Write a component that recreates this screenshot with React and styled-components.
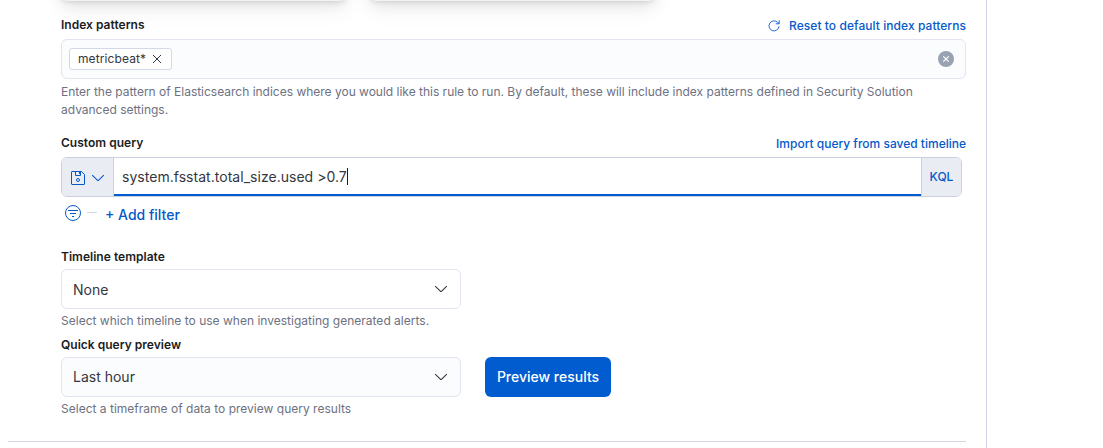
import React from "react";
import styled, { createGlobalStyle } from "styled-components";

const Global = createGlobalStyle`
  *, *::before, *::after { box-sizing: border-box; }
  html, body { margin: 0; background: #fff; overflow: hidden; }
  body { font-family: Inter, "Liberation Sans", sans-serif; color: #343741; font-size: 14px; }
`;

const Panel = styled.main`
  width: 987px;
  height: 448px;
  overflow: hidden;
  border-right: 1px solid #d0d3e6;
  padding: 0 20px 0 8px;
`;

const Body = styled.div`
  height: 441px;
  padding-left: 53px;
  display: flex;
  flex-direction: column;
`;

const Cards = styled.div`
  display: flex;
  gap: 24px;
  height: 1px;
`;

const Card = styled.div`
  display: flex;
  align-items: flex-end;
  width: 285px;
  height: 1px;
`;

const CardSurface = styled.div`
  flex: none;
  width: 100%;
  height: 120px;
  border-radius: 6px;
  background: #f0f2f7;
  box-shadow: 0 1px 5px rgba(0, 0, 0, 0.1), 0 3.6px 13px rgba(0, 0, 0, 0.07),
    0 8.4px 23px rgba(0, 0, 0, 0.06);
`;

const LabelRow = styled.div`
  display: flex;
  justify-content: space-between;
  height: 18px;
  margin-top: ${(p) => p.$top}px;
  margin-bottom: ${(p) => p.$gap}px;
`;

const Label = styled.label`
  font-size: 12px;
  line-height: 18px;
  font-weight: 600;
  letter-spacing: 0.02px;
  color: #1a1c21;
`;

const Link = styled.a`
  display: flex;
  align-items: center;
  gap: 9px;
  height: 18px;
  margin-top: 1px;
  font-size: 12px;
  line-height: 18px;
  font-weight: 500;
  letter-spacing: ${(p) => p.$tracking || 0}px;
  color: #0559c9;
`;

const Field = styled.div`
  display: flex;
  align-items: center;
  justify-content: space-between;
  width: ${(p) => p.$width}px;
  height: 40px;
  padding: 0 ${(p) => p.$right || 11}px 0 ${(p) => p.$left || 11}px;
  border: 1px solid #e2e5f0;
  border-radius: 6px;
  background: ${(p) => (p.$plain ? "#fff" : "#fbfcfd")};
`;

const FieldValue = styled.span`
  padding-bottom: ${(p) => (p.$raised ? 2 : 0)}px;
`;

const Pill = styled.span`
  display: flex;
  align-items: center;
  gap: 6px;
  height: 22px;
  padding: 0 9px 0 8px;
  border: 1px solid #d3d8e8;
  border-radius: 3px;
  background: #fff;
  font-size: 12px;
  line-height: 18px;
  letter-spacing: 0.1px;
`;

const PillText = styled.span`
  padding-bottom: 1px;
`;

const Help = styled.p`
  margin: ${(p) => (p.$tight ? 3 : 4)}px 0 0;
  font-size: 12px;
  line-height: 18px;
  letter-spacing: ${(p) => (p.$tight ? 0.01 : -0.008)}px;
  color: #6d7182;
`;

const QueryBar = styled.div`
  display: flex;
  width: 901px;
  height: 40px;
  border: 1px solid #cbcfe2;
  border-radius: 6px;
  overflow: hidden;
`;

const SaveButton = styled.button`
  display: flex;
  align-items: center;
  gap: 4px;
  width: 52px;
  padding: 2px 0 0 8px;
  border: 0;
  border-right: 1px solid #cbcfe2;
  background: #e9edf3;
`;

const QueryInput = styled.div`
  flex: 1;
  display: flex;
  align-items: center;
  padding-left: 8px;
  border-bottom: 2px solid #005ccf;
  font-size: 14px;
  letter-spacing: 0.03px;
`;

const Caret = styled.span`
  width: 1px;
  height: 17px;
  background: #1a1c21;
`;

const Language = styled.button`
  width: 40px;
  padding: 0 0 2px;
  border: 0;
  border-left: 1px solid #cbcfe2;
  background: #e9edf3;
  color: #0559c9;
  font: 500 12px Inter, sans-serif;
`;

const FilterBar = styled.div`
  display: flex;
  height: 18px;
  margin-top: 8px;
  padding-left: 4px;
`;

const Dash = styled.span`
  width: 10px;
  height: 1px;
  margin: 7px 8px 0 6px;
  background: #d3dae6;
`;

const AddFilter = styled.button`
  margin-top: 1px;
  padding: 0;
  border: 0;
  background: none;
  color: #0559c9;
  font: 500 14px/18px Inter, sans-serif;
`;

const PreviewRow = styled.div`
  display: flex;
  gap: 24px;
`;

const PreviewButton = styled.button`
  width: 126px;
  height: 40px;
  padding: 0 0 2px;
  border: 0;
  border-radius: 6px;
  background: #005ccf;
  color: #fff;
  font: 500 14px Inter, sans-serif;
`;

const Divider = styled.hr`
  height: 1px;
  margin: 0;
  border: 0;
  background: #d3d6e4;
`;

const Icon = styled.svg`
  display: block;
  flex: none;
  fill: none;
  stroke: ${(p) => p.$color || "#0559c9"};
`;

const Chevron = ({ color }) => (
  <Icon width="16" height="16" viewBox="0 0 16 16" $color={color}>
    <path d="M2.200 5.200 7.300 10.200a1 1 0 0 0 1.400 0L13.800 5.200" strokeWidth="1.1" />
  </Icon>
);

const RefreshIcon = () => (
  <Icon width="12" height="12" viewBox="0 0 12 12">
    <path d="M11 6.300A5 5 0 1 1 9.600 2.400L11 3.600M11.200.4v3.400H7.800" strokeWidth=".9" />
  </Icon>
);

const CrossIcon = () => (
  <Icon width="10" height="10" viewBox="0 0 10 10" $color="#343741">
    <path d="m1 1 8 8M9 1 1 9" />
  </Icon>
);

const ClearIcon = () => (
  <Icon width="16" height="16" viewBox="0 0 16 16" $color="#fff">
    <circle cx="8" cy="8" r="8" fill="#98a2b3" stroke="none" />
    <path d="m5.300 5.300 5.400 5.400m0-5.400-5.400 5.400" strokeWidth="1.2" />
  </Icon>
);

const SaveIcon = () => (
  <Icon width="16" height="16" viewBox="0 0 16 16">
    <path d="M2 1.500h9.500l3 3V14a.5.5 0 0 1-.5.5H2a.5.5 0 0 1-.5-.5V2a.5.5 0 0 1 .5-.5ZM5.500 1.500v4h5v-4M9.500 2v2" />
    <circle cx="8" cy="10" r="1.500" />
  </Icon>
);

const FilterIcon = () => (
  <Icon width="16" height="16" viewBox="0 0 16 16">
    <circle cx="8" cy="8" r="7.500" />
    <path d="M3 5.500h10M5 8.500h6M7 11.500h2" />
  </Icon>
);

export default function App() {
  return (
    <>
      <Global />
      <Panel>
        <Body>
          <Cards>
            <Card><CardSurface /></Card>
            <Card><CardSurface /></Card>
          </Cards>
          <LabelRow $top={15} $gap={5}>
            <Label>Index patterns</Label>
            <Link $tracking={0.06}><RefreshIcon />Reset to default index patterns</Link>
          </LabelRow>
          <Field $width={905} $left={7}>
            <Pill><PillText>metricbeat*</PillText><CrossIcon /></Pill>
            <ClearIcon />
          </Field>
          <Help>
            Enter the pattern of Elasticsearch indices where you would like this rule to run. By default, these will include index patterns defined in Security Solution advanced settings.
          </Help>
          <LabelRow $top={15} $gap={5}>
            <Label>Custom query</Label>
            <Link>Import query from saved timeline</Link>
          </LabelRow>
          <QueryBar>
            <SaveButton><SaveIcon /><Chevron /></SaveButton>
            <QueryInput>system.fsstat.total_size.used &gt;0.7<Caret /></QueryInput>
            <Language>KQL</Language>
          </QueryBar>
          <FilterBar>
            <FilterIcon />
            <Dash />
            <AddFilter>+ Add filter</AddFilter>
          </FilterBar>
          <LabelRow $top={25} $gap={3}>
            <Label>Timeline template</Label>
          </LabelRow>
          <Field $width={400} $plain>
            <FieldValue>None</FieldValue>
            <Chevron color="#343741" />
          </Field>
          <Help $tight>Select which timeline to use when investigating generated alerts.</Help>
          <LabelRow $top={6} $gap={3}>
            <Label>Quick query preview</Label>
          </LabelRow>
          <PreviewRow>
            <Field $width={400}>
              <FieldValue $raised>Last hour</FieldValue>
              <Chevron color="#343741" />
            </Field>
            <PreviewButton>Preview results</PreviewButton>
          </PreviewRow>
          <Help $tight>Select a timeframe of data to preview query results</Help>
        </Body>
        <Divider />
      </Panel>
    </>
  );
}
